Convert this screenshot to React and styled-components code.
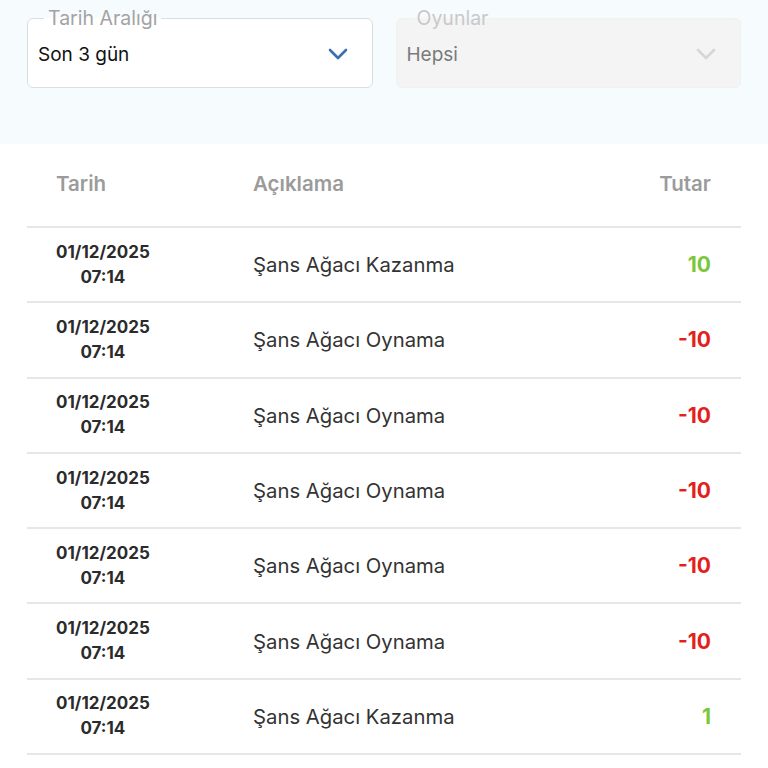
import styled, { createGlobalStyle } from "styled-components";

const GlobalStyle = createGlobalStyle`
    body {
        margin: 0;
        background: #ffffff;
        font-family: "Inter", "Noto Sans", sans-serif;
    }
`;

const FilterPanel = styled.div`
    background: #f6fbfe;
    padding: 8px 27px 56px;
    display: grid;
    grid-template-columns: 1fr 1fr;
    gap: 23px;
`;

const SelectBox = styled.fieldset`
    margin: 0;
    padding: 0 24px 0 10px;
    min-width: 0;
    border: 1.5px solid ${(p) => (p.disabled ? "#f1f1f1" : "#dadde2")};
    border-radius: 6px;
    background: ${(p) => (p.disabled ? "#f4f4f4" : "#ffffff")};
    legend {
        margin-left: 6px;
        padding: 0 4px;
        font-size: 19.5px;
        line-height: 20px;
        color: ${(p) => (p.disabled ? "#c9c9c9" : "#a3a3a3")};
    }
`;

const SelectValue = styled.div`
    height: 52px;
    padding-bottom: 7px;
    display: flex;
    align-items: center;
    justify-content: space-between;
    font-size: 19px;
    color: ${(p) => (p.disabled ? "#7a7a7a" : "#111111")};
`;

const Table = styled.div`
    margin: 0 27px;
`;

const Row = styled.div`
    display: grid;
    grid-template-columns: 197px 1fr auto;
    align-items: center;
    height: ${(p) => (p.head ? "78px" : "73.3px")};
    padding: ${(p) => (p.head ? "0 30px 4px 29px" : "0 30px 0 29px")};
    border-bottom: 2px solid #e6e7e8;
`;

const HeadCell = styled.div`
    font-size: 20.5px;
    font-weight: 600;
    color: #9b9b9b;
    text-align: ${(p) => (p.right ? "right" : "left")};
`;

const DateCell = styled.div`
    display: inline-block;
    justify-self: start;
    text-align: center;
    font-size: 17px;
    font-weight: 700;
    line-height: 25px;
    color: #2b2b2b;
`;

const Desc = styled.div`
    font-size: 20.3px;
    color: #333333;
`;

const Amount = styled.div`
    font-size: 21px;
    font-weight: 700;
    text-align: right;
    color: ${(p) => (p.negative ? "#e3211c" : "#7cc63a")};
`;

const Chevron = ({ color }) => (
    <svg width="20" height="14" viewBox="0 0 20 14" fill="none">
        <path
            d="M2 3 L10 11 L18 3"
            stroke={color}
            strokeWidth="2.6"
            strokeLinecap="round"
            strokeLinejoin="round"
        />
    </svg>
);

const rows = [
    { desc: "Şans Ağacı Kazanma", amount: 10 },
    { desc: "Şans Ağacı Oynama", amount: -10 },
    { desc: "Şans Ağacı Oynama", amount: -10 },
    { desc: "Şans Ağacı Oynama", amount: -10 },
    { desc: "Şans Ağacı Oynama", amount: -10 },
    { desc: "Şans Ağacı Oynama", amount: -10 },
    { desc: "Şans Ağacı Kazanma", amount: 1 },
];

export default function App() {
    return (
        <>
            <GlobalStyle />
            <FilterPanel>
                <SelectBox>
                    <legend>Tarih Aralığı</legend>
                    <SelectValue>
                        Son 3 gün
                        <Chevron color="#3a6fb0" />
                    </SelectValue>
                </SelectBox>
                <SelectBox disabled>
                    <legend>Oyunlar</legend>
                    <SelectValue disabled>
                        Hepsi
                        <Chevron color="#d6d6d6" />
                    </SelectValue>
                </SelectBox>
            </FilterPanel>
            <Table>
                <Row head>
                    <HeadCell>Tarih</HeadCell>
                    <HeadCell>Açıklama</HeadCell>
                    <HeadCell right>Tutar</HeadCell>
                </Row>
                {rows.map((r, i) => (
                    <Row key={i}>
                        <DateCell>
                            01/12/2025
                            <br />
                            07:14
                        </DateCell>
                        <Desc>{r.desc}</Desc>
                        <Amount negative={r.amount < 0}>{r.amount}</Amount>
                    </Row>
                ))}
            </Table>
        </>
    );
}
